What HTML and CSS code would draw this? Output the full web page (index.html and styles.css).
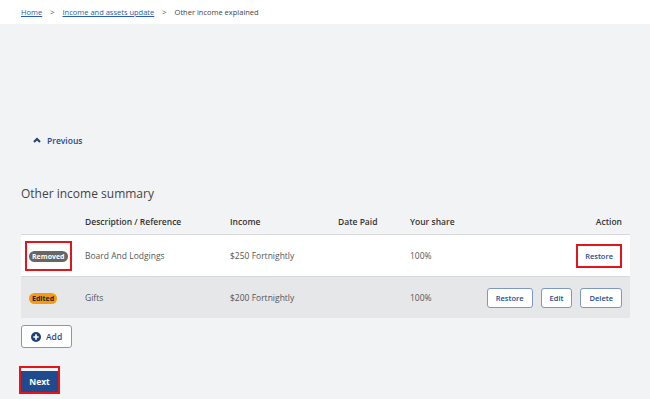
FILE: index.html
```html
<!DOCTYPE html>
<html>
<head>
<meta charset="utf-8">
<title>Other income explained</title>
<link rel="stylesheet" href="styles.css">
</head>
<body>
<div class="crumbs">
  <a href="#">Home</a>
  <span class="sep">&gt;</span>
  <a href="#">Income and assets update</a>
  <span class="sep">&gt;</span>
  <span class="current">Other income explained</span>
</div>

<div class="page">
  <a class="previous" href="#">
    <svg width="8" height="6" viewBox="0 0 8 6"><path d="M1 5 L4 2 L7 5" fill="none" stroke="#1f3f7a" stroke-width="2"/></svg>
    Previous
  </a>

  <h2 class="summary-title">Other income summary</h2>

  <table class="summary">
    <thead>
      <tr>
        <th class="col-status"></th>
        <th class="col-desc">Description / Reference</th>
        <th class="col-income">Income</th>
        <th class="col-date">Date Paid</th>
        <th class="col-share">Your share</th>
        <th class="col-action">Action</th>
      </tr>
    </thead>
    <tbody>
      <tr class="row-removed">
        <td><span class="highlight badge-box"><span class="badge badge-removed">Removed</span></span></td>
        <td>Board And Lodgings</td>
        <td>$250 Fortnightly</td>
        <td></td>
        <td>100%</td>
        <td class="col-action"><span class="highlight"><button class="btn btn-plain">Restore</button></span></td>
      </tr>
      <tr class="row-edited">
        <td><span class="badge badge-edited">Edited</span></td>
        <td>Gifts</td>
        <td>$200 Fortnightly</td>
        <td></td>
        <td>100%</td>
        <td class="col-action">
          <div class="actions">
            <button class="btn">Restore</button>
            <button class="btn">Edit</button>
            <button class="btn">Delete</button>
          </div>
        </td>
      </tr>
    </tbody>
  </table>

  <button class="btn btn-add">
    <svg width="10" height="10" viewBox="0 0 10 10"><circle cx="5" cy="5" r="5" fill="#1f3f7a"/><path d="M5 2.3 V7.7 M2.3 5 H7.7" stroke="#fff" stroke-width="1.7"/></svg>
    Add
  </button>

  <div class="next-wrap">
    <span class="highlight"><button class="btn-next">Next</button></span>
  </div>
</div>
</body>
</html>
```

FILE: styles.css
```css
body {
  margin: 0;
  font-family: "Open Sans", "Noto Sans", sans-serif;
  color: #444;
  background: #f2f3f5;
}

.crumbs {
  background: #fff;
  height: 24px;
  padding-left: 21px;
  display: flex;
  align-items: center;
  font-size: 7.5px;
  color: #444;
}

.crumbs a {
  color: #2a5db0;
}

.crumbs .sep {
  margin: 0 8px;
  color: #555;
}

.page {
  padding: 102px 20px 10px 21px;
}

.previous {
  display: inline-flex;
  align-items: center;
  gap: 6px;
  margin-left: 12px;
  font-size: 8.5px;
  font-weight: 600;
  color: #1f4b8e;
  text-decoration: none;
}

.summary-title {
  font-size: 12px;
  font-weight: normal;
  color: #444;
  margin: 37px 0 6px;
}

.summary {
  width: 100%;
  border-collapse: collapse;
  font-size: 8.5px;
}

.summary th {
  text-align: left;
  font-weight: 600;
  color: #333;
  height: 26px;
  padding: 0;
  border-bottom: 1px solid #d8d9db;
}

.summary td {
  height: 41px;
  padding: 0;
  color: #555;
}

.col-status { width: 64px; }
.col-desc { width: 145px; }
.col-income { width: 108px; }
.col-date { width: 72px; }

.summary .col-action {
  text-align: right;
  padding-right: 8px;
}

.row-removed td {
  background: #fff;
  border-bottom: 1px solid #d8d9db;
}

.row-edited td {
  background: #e6e7e9;
}

.highlight {
  display: inline-block;
  border: 2px solid #e4141b;
  padding: 2px;
}

.badge-box {
  margin-left: 4px;
  padding: 7px 2px;
}

.badge {
  display: inline-block;
  font-size: 7px;
  font-weight: 700;
  border-radius: 6px;
  padding: 1px 3px;
  line-height: 9px;
}

.badge-removed {
  background: #666;
  color: #fff;
}

.badge-edited {
  background: #f49b12;
  color: #222;
  margin-left: 8px;
}

.actions {
  display: flex;
  justify-content: flex-end;
  gap: 8px;
}

.btn {
  font-family: inherit;
  font-size: 7.5px;
  font-weight: 600;
  color: #1f4b8e;
  background: #fff;
  border: 1px solid #7d98c4;
  border-radius: 3px;
  height: 20px;
  padding: 0 8px;
}

.btn-plain {
  border: none;
  height: 16px;
  padding: 0 5px;
}

.btn-add {
  display: inline-flex;
  align-items: center;
  gap: 5px;
  margin-top: 7px;
  height: 23px;
  padding: 0 9px;
  font-size: 8.5px;
}

.next-wrap {
  margin-top: 18px;
  margin-left: -2px;
}

.next-wrap .highlight {
  padding: 0;
}

.btn-next {
  font-family: inherit;
  font-size: 8.5px;
  font-weight: 700;
  color: #fff;
  background: #1f4b8e;
  border: none;
  height: 21px;
  width: 37px;
  padding: 0;
}
```
